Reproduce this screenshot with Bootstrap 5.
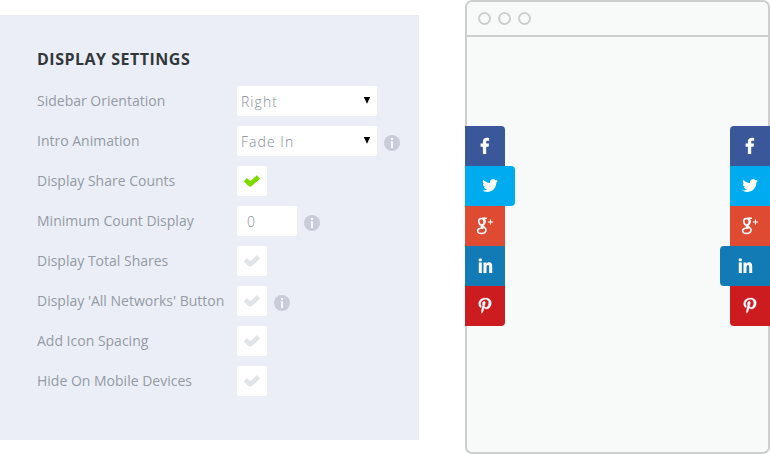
<!DOCTYPE html>
<html lang="en">
<head>
<meta charset="utf-8">
<meta name="viewport" content="width=device-width, initial-scale=1">
<title>Display Settings</title>
<link href="https://cdn.jsdelivr.net/npm/bootstrap@5.3.0/dist/css/bootstrap.min.css" rel="stylesheet">
<style>
body { width: 770px; height: 454px; overflow: hidden; background: #fff; font-family: "Open Sans", sans-serif; font-size: 14px; }
.settings { width: 419px; height: 425px; margin-top: 15px; padding: 33px 0 0 37px; background: #ebeef6; }
.settings h2 { font-size: 16px; line-height: 22px; font-weight: 700; letter-spacing: .5px; color: #32373b; margin: 0 0 16px; }
.option-list { gap: 10px; }
.option-row { height: 30px; }
.option-row label { width: 200px; color: #949ba5; line-height: 30px; white-space: nowrap; }
.option-row .field { height: 30px; background: #fff; border-radius: 2px; color: #858d96; font-weight: 300; letter-spacing: 1.05px; line-height: 32px; }
.pick { width: 140px; padding: 0 6px 0 4px; }
.pick svg { margin-top: 11px; }
.number-box { width: 60px; padding-left: 10px; }
.tick { width: 30px; }
.tick svg { width: 30px; height: 30px; fill: none; stroke: #e1e4e8; stroke-width: 4.7; }
.tick.on svg { stroke: #7edb00; }
.hint { width: 16px; height: 16px; margin: 4px 0 0 7px; }
.window { width: 305px; height: 454px; background: #f8faf9; border: 2px solid #cdcecd; border-radius: 7px; }
.window-bar { height: 35px; padding: 0 0 1px 11px; gap: 7px; border-bottom: 2px solid #cdcecd; }
.dot { width: 13px; height: 13px; border: 2px solid #cdcecd; border-radius: 50%; }
.window-body { margin: 89px -2px 0; }
.tile { width: 40px; height: 40px; }
.tile svg { width: 40px; height: 40px; fill: #fff; }
.wide { width: 50px; }
.fb { background: #3a579a; } .tw { background: #00abf0; } .gp { background: #df4a32; }
.li { background: #127bb6; } .pi { background: #cd1c1f; }
.side-l .fb { border-top-right-radius: 4px; }
.side-l .pi { border-bottom-right-radius: 4px; }
.side-l .wide { border-radius: 0 4px 4px 0; }
.side-r .fb { border-top-left-radius: 4px; }
.side-r .pi { border-bottom-left-radius: 4px; }
.side-r .wide { border-radius: 4px 0 0 4px; }
</style>
<script src="https://cdn.jsdelivr.net/npm/bootstrap@5.3.0/dist/js/bootstrap.bundle.min.js"></script>
</head>
<body>
<svg class="d-none">
  <symbol id="check" viewBox="0 0 30 30"><path d="M8.300 13.700L13.200 18.300L21.500 10.900" stroke-linejoin="round"/></symbol>
  <symbol id="info" viewBox="0 0 16 16"><circle cx="8" cy="8" r="8" fill="#c8cdd8"/><path d="M7 3h2v2H7zM6.500 6.200H9V13H7V7.200h-.5z" fill="#f7f8fb"/></symbol>
  <symbol id="arrow" viewBox="0 0 8 7"><path d="M.8 0h6.400L4 6.800z" fill="#000"/></symbol>
  <symbol id="fb" viewBox="0 0 40 40"><path d="M17.900 28v-7.300h-2.300v-3.200h2.300v-1.700c0-2.700 1.500-4 4-4 1 0 1.900.1 2.200.2v2.800h-1.500c-1.100 0-1.400.5-1.400 1.200v1.500h2.800l-.4 3.200h-2.400V28z"/></symbol>
  <symbol id="tw" viewBox="0 0 40 40"><path transform="translate(12.200 11.700) scale(.655)" d="M23.950 4.570a10 10 0 0 1-2.820.77 4.960 4.960 0 0 0 2.160-2.720c-.95.560-2 .96-3.130 1.180a4.920 4.920 0 0 0-8.380 4.480C7.690 8.100 4.070 6.130 1.640 3.160a4.820 4.820 0 0 0-.67 2.480c0 1.710.87 3.210 2.190 4.100a4.900 4.900 0 0 1-2.230-.62v.06a4.920 4.920 0 0 0 3.950 4.830 5 5 0 0 1-2.210.08 4.940 4.940 0 0 0 4.600 3.420A9.870 9.870 0 0 1 0 19.540a13.990 13.990 0 0 0 7.550 2.210c9.050 0 14-7.500 14-13.980 0-.21 0-.42-.02-.63a9.940 9.940 0 0 0 2.420-2.570z"/></symbol>
  <symbol id="gp" viewBox="0 0 40 40"><g fill="none" stroke="#fff" stroke-width="1.500"><ellipse cx="16.500" cy="15.700" rx="2.700" ry="3.300" transform="rotate(-12 16.500 15.700)"/><path d="M22 12.200H17.200M18.500 12.300C20.600 13.800 20.700 16.600 18.800 18.200C17.400 19.500 17.800 20.200 19.200 21.200C22.400 23.700 21 27.300 16.800 27.500C12 27.700 11.200 23.500 15 22.300C16 21.900 17.300 21.900 18.700 21.900M16.600 19.100C16.200 20.200 16.400 21 17.300 21.700"/><path d="M25.500 13.400v5.200M22.900 16h5.200" stroke-width="1.200"/></g></symbol>
  <symbol id="li" viewBox="0 0 40 40"><rect x="13.800" y="12.400" width="3" height="2.900" rx=".9"/><path d="M13.800 16.500h3v10.400h-3zM18.500 16.500h2.900v1.400c.5-.9 1.400-1.600 2.700-1.600 2.500 0 3.100 1.700 3.100 4.400v6.200h-3v-5.600c0-1.400-.2-2.400-1.300-2.400s-1.400 1-1.400 2.400v5.600h-3z"/></symbol>
  <symbol id="pi" viewBox="0 0 40 40"><path transform="translate(11.600 11.800) scale(.655)" d="M13.300.3C6.600.3 3.200 4.800 3.200 9c0 2.600 1 4.900 3.100 5.700.3.100.6 0 .7-.4l.3-1.100c.1-.4.100-.5-.2-.9-.6-.7-1-1.600-1-2.900C6.100 5.700 8.900 2.400 13 2.400c3.600 0 5.600 2.200 5.600 5.200 0 3.900-1.700 7.200-4.300 7.200-1.400 0-2.500-1.200-2.100-2.600.4-1.700 1.200-3.500 1.200-4.800 0-1.100-.6-2-1.800-2-1.400 0-2.600 1.500-2.600 3.500 0 1.300.4 2.100.4 2.100L7.700 18.300c-.5 2.200-.1 4.900 0 5.200 0 .2.200.2.300.1.100-.2 1.900-2.300 2.500-4.500l1-3.800c.5.900 1.900 1.700 3.400 1.700 4.500 0 7.500-4.100 7.500-9.500 0-4.100-3.500-7.200-9.100-7.200z" stroke="#fff" stroke-width=".5"/></symbol>
</svg>

<main class="d-flex justify-content-between align-items-start">
  <section class="settings">
    <h2>DISPLAY SETTINGS</h2>
    <div class="option-list d-flex flex-column">
      <div class="option-row d-flex align-items-center"><label>Sidebar Orientation</label>
        <div class="field pick d-flex justify-content-between"><span>Right</span><svg width="8" height="7"><use href="#arrow"/></svg></div></div>
      <div class="option-row d-flex align-items-center"><label>Intro Animation</label>
        <div class="field pick d-flex justify-content-between"><span>Fade In</span><svg width="8" height="7"><use href="#arrow"/></svg></div>
        <svg class="hint"><use href="#info"/></svg></div>
      <div class="option-row d-flex align-items-center"><label>Display Share Counts</label>
        <div class="field tick on d-flex"><svg><use href="#check"/></svg></div></div>
      <div class="option-row d-flex align-items-center"><label>Minimum Count Display</label>
        <div class="field number-box">0</div><svg class="hint"><use href="#info"/></svg></div>
      <div class="option-row d-flex align-items-center"><label>Display Total Shares</label>
        <div class="field tick d-flex"><svg><use href="#check"/></svg></div></div>
      <div class="option-row d-flex align-items-center"><label>Display 'All Networks' Button</label>
        <div class="field tick d-flex"><svg><use href="#check"/></svg></div><svg class="hint"><use href="#info"/></svg></div>
      <div class="option-row d-flex align-items-center"><label>Add Icon Spacing</label>
        <div class="field tick d-flex"><svg><use href="#check"/></svg></div></div>
      <div class="option-row d-flex align-items-center"><label>Hide On Mobile Devices</label>
        <div class="field tick d-flex"><svg><use href="#check"/></svg></div></div>
    </div>
  </section>

  <section class="window">
    <div class="window-bar d-flex align-items-center"><span class="dot"></span><span class="dot"></span><span class="dot"></span></div>
    <div class="window-body d-flex justify-content-between">
      <div class="side-l d-flex flex-column align-items-start">
        <div class="tile fb d-flex justify-content-center"><svg><use href="#fb"/></svg></div>
        <div class="tile tw wide d-flex justify-content-center"><svg><use href="#tw"/></svg></div>
        <div class="tile gp d-flex justify-content-center"><svg><use href="#gp"/></svg></div>
        <div class="tile li d-flex justify-content-center"><svg><use href="#li"/></svg></div>
        <div class="tile pi d-flex justify-content-center"><svg><use href="#pi"/></svg></div>
      </div>
      <div class="side-r d-flex flex-column align-items-end">
        <div class="tile fb d-flex justify-content-center"><svg><use href="#fb"/></svg></div>
        <div class="tile tw d-flex justify-content-center"><svg><use href="#tw"/></svg></div>
        <div class="tile gp d-flex justify-content-center"><svg><use href="#gp"/></svg></div>
        <div class="tile li wide d-flex justify-content-center"><svg><use href="#li"/></svg></div>
        <div class="tile pi d-flex justify-content-center"><svg><use href="#pi"/></svg></div>
      </div>
    </div>
  </section>
</main>
</body>
</html>
